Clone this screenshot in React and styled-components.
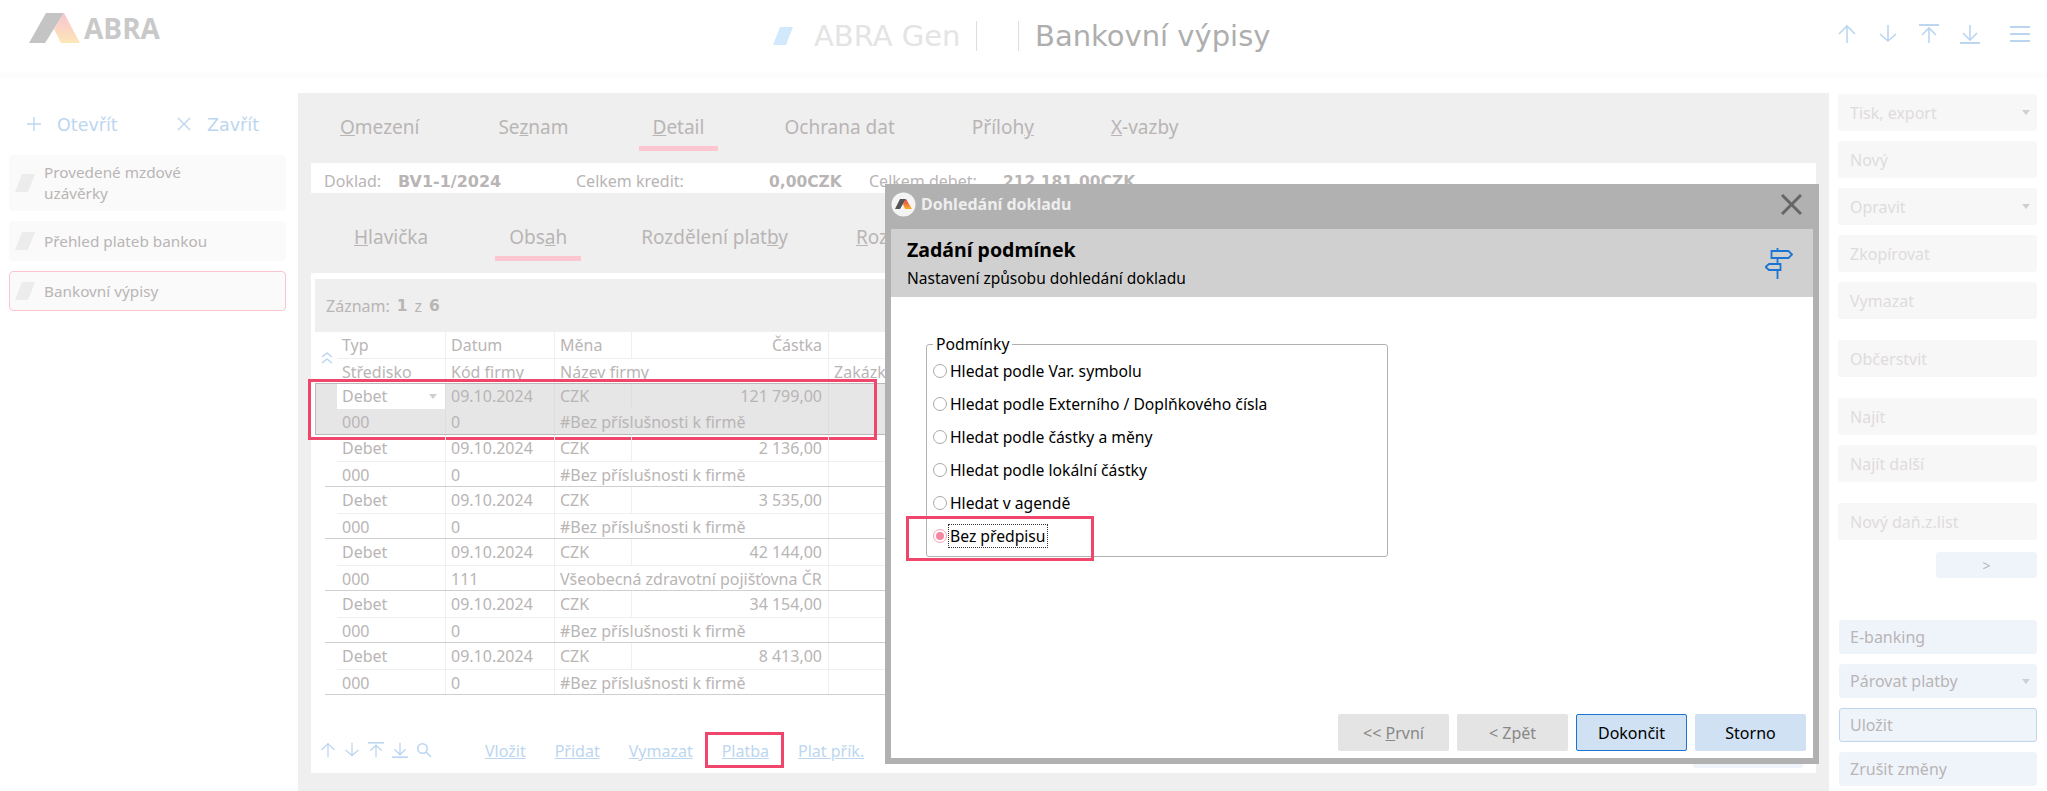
import React from "react";
import styled, { createGlobalStyle } from "styled-components";

const FONT = `"Noto Sans", "DejaVu Sans", sans-serif`;
const HEADING = `"DejaVu Sans", sans-serif`;
const TEXT = "#b9b5b5";
const LINK = "#bcd6f0";
const MARK = "#f0466c";

const GlobalStyle = createGlobalStyle`
  html, body { margin: 0; padding: 0; background: #fff; }
  *, *::before, *::after { box-sizing: border-box; }
  body { font-family: ${FONT}; }
`;

const Page = styled.div`
  position: relative;
  width: 2047px;
  height: 791px;
  overflow: hidden;
  display: flex;
  flex-direction: column;
`;

/* header */
const Header = styled.header`
  height: 78px;
  margin-bottom: 15px;
  flex: none;
  display: grid;
  grid-template-columns: 773px 1fr auto;
  border-bottom: 6px solid #fdfdfd;
`;
const Brand = styled.div`
  display: flex;
  align-items: center;
  padding: 0 0 16px 29px;
  gap: 3px;
`;
const BrandName = styled.span`
  font-family: "Open Sans", sans-serif;
  font-weight: 700;
  font-size: 28px;
  color: #c9c9c9;
`;
const TitleRow = styled.div`
  display: flex;
  align-items: center;
  font-family: ${HEADING};
`;
const AppName = styled.span`
  font-size: 29px;
  color: #e4e4e4;
  margin-left: 21px;
  width: 162px;
  white-space: nowrap;
`;
const Divider = styled.span`
  width: 1px;
  height: 30px;
  background: #dedede;
  margin-right: ${(p) => p.$gap}px;
`;
const PageName = styled.span`
  font-size: 29px;
  color: #aeaeae;
`;
const NavIcons = styled.div`
  display: flex;
  align-items: center;
  gap: 21px;
  padding: 0 17px 4px 0;
  color: ${LINK};
`;

/* layout */
const Body = styled.div`
  flex: 1;
  display: flex;
  min-height: 0;
`;
const LeftBar = styled.aside`
  width: 298px;
  flex: none;
  padding: 0 12px 0 9px;
`;
const OpenClose = styled.div`
  display: flex;
  height: 62px;
  padding: 19px 0 0 18px;
  color: ${LINK};
  font-family: ${HEADING};
  font-size: 17.5px;
`;
const OpenCloseItem = styled.div`
  display: flex;
  flex: none;
  align-items: center;
  gap: 16px;
  height: 24px;
  width: 150px;
  span { margin-top: 2px; }
`;
const MenuItem = styled.div`
  display: flex;
  align-items: center;
  gap: 9px;
  padding-left: 5px;
  height: ${(p) => p.$h}px;
  margin-bottom: 10px;
  background: #fafafa;
  border-radius: 4px;
  border: 1px solid ${(p) => (p.$active ? "#fcc5cf" : "#fafafa")};
  color: ${TEXT};
  font-size: 15.3px;
  line-height: 21px;
`;
const Main = styled.main`
  flex: 1;
  min-width: 0;
  background: #efefef;
  display: flex;
  flex-direction: column;
`;
const Tabs = styled.nav`
  display: flex;
  height: ${(p) => p.$h}px;
  padding-left: ${(p) => p.$left}px;
  flex: none;
`;
const Tab = styled.div`
  margin: 0 26px 0 ${(p) => p.$before ?? 26}px;
  padding: 0 14px 6px;
  height: 100%;
  display: flex;
  align-items: flex-end;
  font-size: 19px;
  line-height: 26px;
  color: ${TEXT};
  white-space: nowrap;
  border-bottom: 5px solid ${(p) => (p.$active ? "#fdc6d0" : "transparent")};
`;
const InfoStrip = styled.div`
  flex: none;
  height: 30px;
  margin: 12px 13px 0;
  padding-top: 6px;
  background: #fff;
  display: flex;
  align-items: center;
  font-size: 16px;
  color: ${TEXT};
  overflow: hidden;
`;
const InfoLabel = styled.span`
  width: ${(p) => p.$w}px;
  flex: none;
  white-space: nowrap;
  padding-left: ${(p) => p.$pad ?? 0}px;
`;
const StrongValue = styled.b`
  font-family: ${HEADING};
  font-size: ${(p) => p.$size ?? 15.5}px;
`;
const Panel = styled.section`
  flex: 1;
  margin: 12px 13px 18px;
  background: #fff;
  padding: 6px 0 4px 4px;
  display: flex;
  flex-direction: column;
  min-height: 0;
`;
const RecordBar = styled.div`
  height: 53px;
  flex: none;
  display: flex;
  align-items: center;
  gap: 7px;
  padding-left: 11px;
  background: #efefef;
  color: ${TEXT};
  font-size: 16px;
`;
const Table = styled.div`
  position: relative;
  padding-left: 10px;
`;
const Group = styled.div`
  position: relative;
  border-bottom: 1px solid #cfcfcf;
  ${(p) => p.$head && "border-bottom: 0;"}
  ${(p) =>
    p.$selected &&
    `
    margin-left: -10px;
    padding-left: 10px;
    background: #e6e6e6;
    outline: 1px solid #b9b9b9;
    outline-offset: -1px;
    &::after {
      content: "";
      position: absolute;
      left: -7px;
      top: -4px;
      width: 569px;
      height: 61px;
      border: 3px solid ${MARK};
    }
  `}
`;
const Row = styled.div`
  display: grid;
  grid-template-columns: 12px 109px 109px 77px 197px 1fr;
  height: 26px;
  & + & {
    height: 25px;
  }
  & + & > div:not(:first-child) { border-top: 1px solid ${(p) => (p.$sel ? "#dedede" : "#efefef")}; }
`;
const Gutter = styled.div``;
const Cell = styled.div`
  padding: 0 6px 0 5px;
  font-size: 16px;
  line-height: 27px;
  color: ${TEXT};
  white-space: nowrap;
  overflow: hidden;
  text-align: ${(p) => (p.$right ? "right" : "left")};
  border-right: 1px solid ${(p) => (p.$sel ? "#dedede" : "#efefef")};
  ${(p) => p.$wide && "grid-column: span 2;"}
`;
const SelectCell = styled(Cell)`
  background: #fff;
  display: flex;
  justify-content: space-between;
  align-items: center;
  padding-right: 8px;
`;
const Caret = styled.i`
  width: 0;
  height: 0;
  border-left: 4px solid transparent;
  border-right: 4px solid transparent;
  border-top: 5px solid #cfcfcf;
`;
const Chevrons = styled.svg`
  position: absolute;
  left: 6px;
  top: 19px;
`;
const Footer = styled.div`
  margin-top: auto;
  height: 36px;
  flex: none;
  display: flex;
  align-items: center;
  padding-left: 5px;
  color: ${LINK};
`;
const FooterIcons = styled.div`
  display: flex;
  gap: 8px;
  width: 165px;
  align-items: center;
  padding-bottom: 3px;
`;
const Links = styled.div`
  display: flex;
  gap: 29px;
  flex: 1;
`;
const ToolLink = styled.a`
  position: relative;
  font-size: 16px;
  line-height: 22px;
  color: ${LINK};
  text-decoration: underline;
  ${(p) =>
    p.$marked &&
    `
    &::after {
      content: "";
      position: absolute;
      left: -17px;
      right: -15px;
      top: -8px;
      height: 36px;
      border: 3px solid ${MARK};
    }
  `}
`;
const GhostButton = styled.div`
  width: 110px;
  height: 34px;
  background: #eff4fb;
  margin: 0 13px 0 0;
  border-radius: 3px;
`;

/* right bar */
const RightBar = styled.aside`
  width: 218px;
  flex: none;
  padding: 1px 10px 0 9px;
  display: flex;
  flex-direction: column;
`;
const SideButton = styled.div`
  flex: none;
  height: ${(p) => (p.$blue ? 34 : 37)}px;
  margin-top: ${(p) => p.$top ?? 10}px;
  margin-left: ${(p) => (p.$blue ? 1 : 0)}px;
  padding: 0 6px 0 ${(p) => (p.$blue ? 10 : 11)}px;
  display: flex;
  align-items: center;
  justify-content: space-between;
  border-radius: 3px;
  font-size: 16px;
  background: ${(p) => (p.$blue ? "#eff4fb" : "#f7f7f7")};
  color: ${(p) => (p.$blue ? TEXT : "#dfdcdc")};
  border: 1px solid ${(p) => (p.$focus ? LINK : "transparent")};
`;
const NextButton = styled.div`
  align-self: flex-end;
  width: 101px;
  height: 26px;
  margin-top: 12px;
  background: #eff4fb;
  border-radius: 3px;
  color: ${TEXT};
  font-size: 14px;
  display: flex;
  align-items: center;
  justify-content: center;
`;

/* dialog */
const Dialog = styled.div`
  position: absolute;
  left: 885px;
  top: 184px;
  width: 934px;
  height: 580px;
  background: #b1b1b1;
  display: flex;
  flex-direction: column;
  padding: 0 6px 6px;
  font-size: 15.7px;
  color: #000;
`;
const DialogTitle = styled.div`
  height: 45px;
  flex: none;
  display: flex;
  align-items: center;
  gap: 5px;
  padding-bottom: 5px;
  font-weight: 700;
  font-size: 16px;
  color: #eee;
  span { flex: 1; }
`;
const CloseIcon = styled.svg`
  margin-right: 11px;
`;
const DialogHead = styled.div`
  height: 68px;
  flex: none;
  background: #d0d0d0;
  padding: 8px 20px 0 16px;
  display: flex;
  justify-content: space-between;
  align-items: flex-start;
  h2 { margin: 0 0 5px; font-size: 19.5px; line-height: 26px; font-weight: 700; }
  p { margin: 0; font-size: 15.5px; line-height: 20px; }
`;
const Signpost = styled.svg`
  margin-top: 11px;
`;
const DialogBody = styled.div`
  flex: 1;
  background: #fff;
  position: relative;
  display: flex;
  flex-direction: column;
  padding: 39px 7px 7px 35px;
`;
const Conditions = styled.fieldset`
  width: 462px;
  height: 221px;
  margin: 0;
  padding: 2px 0 0 6px;
  border: 1px solid #b1b1b1;
  border-radius: 3px;
  legend {
    padding: 0 3px;
    margin-left: 0;
    font-size: 15.7px;
    line-height: 16px;
  }
`;
const Option = styled.div`
  position: relative;
  display: flex;
  align-items: center;
  height: 33px;
  gap: 2px;
  ${(p) =>
    p.$marked &&
    `
    &::after {
      content: "";
      position: absolute;
      left: -27px;
      top: -3px;
      width: 188px;
      height: 45px;
      border: 3px solid ${MARK};
    }
  `}
`;
const Radio = styled.i`
  width: 14px;
  height: 14px;
  flex: none;
  border-radius: 50%;
  border: 1px solid ${(p) => (p.$on ? "#f7a3b6" : "#aaa")};
  background: #fff;
  display: flex;
  align-items: center;
  justify-content: center;
  &::after {
    content: "";
    width: 8px;
    height: 8px;
    border-radius: 50%;
    background: ${(p) => (p.$on ? "#f7889f" : "transparent")};
  }
`;
const OptionText = styled.span`
  line-height: 22px;
  padding: 0 1px;
  ${(p) => p.$focus && "outline: 1px dotted #333;"}
`;
const DialogActions = styled.div`
  margin-top: auto;
  display: flex;
  justify-content: flex-end;
  gap: 8px;
`;
const DialogButton = styled.div`
  width: 111px;
  height: 37px;
  border-radius: 2px;
  display: flex;
  align-items: center;
  justify-content: center;
  font-size: 16px;
  background: ${(p) => (p.$off ? "#e4e4e4" : "#cfe1f3")};
  color: ${(p) => (p.$off ? "#888" : "#000")};
  border: 1px solid ${(p) => (p.$primary ? "#1b74d2" : "transparent")};
`;

const Slash = ({ color = "#ececec", w = 20, h = 18 }) => (
  <svg width={w} height={h} viewBox="0 0 20 18">
    <polygon points="7,0 20,0 13,18 0,18" fill={color} />
  </svg>
);

const Arrow = ({ kind, size = 20 }) => {
  const down = kind === "down" || kind === "bottom";
  const bar = kind === "top" || kind === "bottom";
  return (
    <svg width={size} height={size} viewBox="0 0 20 20" fill="none" stroke="currentColor" strokeWidth="1.6">
      {down ? (
        <path d={bar ? "M10 1v15M3 9l7 7 7-7" : "M10 1v16M2 10l8 7 8-7"} />
      ) : (
        <path d={bar ? "M10 4v15M3 11l7-7 7 7" : "M10 2v17M2 10l8-8 8 8"} />
      )}
      {bar && <path d={down ? "M0 19h20" : "M0 1h20"} strokeWidth="2" />}
    </svg>
  );
};

const rows = [
  ["2 136,00", "0", "#Bez příslušnosti k firmě"],
  ["3 535,00", "0", "#Bez příslušnosti k firmě"],
  ["42 144,00", "111", "Všeobecná zdravotní pojišťovna ČR"],
  ["34 154,00", "0", "#Bez příslušnosti k firmě"],
  ["8 413,00", "0", "#Bez příslušnosti k firmě"],
];

const options = [
  "Hledat podle Var. symbolu",
  "Hledat podle Externího / Doplňkového čísla",
  "Hledat podle částky a měny",
  "Hledat podle lokální částky",
  "Hledat v agendě",
];

export default function App() {
  return (
    <Page>
      <GlobalStyle />
      <Header>
        <Brand>
          <svg width="52" height="30" viewBox="0 0 52 30">
            <defs>
              <linearGradient id="abraGrad" x1="0" y1="0" x2="0" y2="1">
                <stop offset="0" stopColor="#f8c4d0" />
                <stop offset="1" stopColor="#fde6b8" />
              </linearGradient>
            </defs>
            <polygon points="17,0 35,0 16,30 0,30" fill="#c4c4c4" />
            <polygon points="35,0 51,30 32,30 25,16" fill="url(#abraGrad)" />
          </svg>
          <BrandName>ABRA</BrandName>
        </Brand>
        <TitleRow>
          <Slash color="#d2e9fd" />
          <AppName>ABRA Gen</AppName>
          <Divider $gap={41} />
          <Divider $gap={16} />
          <PageName>Bankovní výpisy</PageName>
        </TitleRow>
        <NavIcons>
          <Arrow kind="up" />
          <Arrow kind="down" />
          <Arrow kind="top" />
          <Arrow kind="bottom" />
          <svg width="20" height="16" viewBox="0 0 20 16" stroke="currentColor" strokeWidth="2" style={{ marginLeft: 9 }}>
            <path d="M0 1h20M0 8h20M0 15h20" />
          </svg>
        </NavIcons>
      </Header>
      <Body>
        <LeftBar>
          <OpenClose>
            <OpenCloseItem>
              <svg width="14" height="14" viewBox="0 0 14 14" stroke="currentColor" strokeWidth="1.4">
                <path d="M7 0v14M0 7h14" />
              </svg>
              <span>Otevřít</span>
            </OpenCloseItem>
            <OpenCloseItem>
              <svg width="14" height="14" viewBox="0 0 14 14" stroke="currentColor" strokeWidth="1.4">
                <path d="M1 1l12 12M13 1L1 13" />
              </svg>
              <span>Zavřít</span>
            </OpenCloseItem>
          </OpenClose>
          <MenuItem $h={56}>
            <Slash />
            <span>
              Provedené mzdové
              <br />
              uzávěrky
            </span>
          </MenuItem>
          <MenuItem $h={40}>
            <Slash />
            <span>Přehled plateb bankou</span>
          </MenuItem>
          <MenuItem $h={40} $active>
            <Slash />
            <span>Bankovní výpisy</span>
          </MenuItem>
        </LeftBar>
        <Main>
          <Tabs $h={58} $left={2}>
            <Tab><span><u>O</u>mezení</span></Tab>
            <Tab $before={25}><span>Se<u>z</u>nam</span></Tab>
            <Tab $active $before={30}><span><u>D</u>etail</span></Tab>
            <Tab>Ochrana dat</Tab>
            <Tab $before={23}><span>Příloh<u>y</u></span></Tab>
            <Tab $before={23}><span><u>X</u>-vazby</span></Tab>
          </Tabs>
          <InfoStrip>
            <InfoLabel $w={87} $pad={13}>Doklad:</InfoLabel>
            <InfoLabel $w={178}><StrongValue $size={16}>BV1-1/2024</StrongValue></InfoLabel>
            <InfoLabel $w={193}>Celkem kredit:</InfoLabel>
            <InfoLabel $w={100}><StrongValue>0,00CZK</StrongValue></InfoLabel>
            <InfoLabel $w={134}>Celkem debet:</InfoLabel>
            <InfoLabel $w={200}><StrongValue>212 181,00CZK</StrongValue></InfoLabel>
          </InfoStrip>
          <Tabs $h={68} $left={16}>
            <Tab><span><u>H</u>lavička</span></Tab>
            <Tab $active $before={27}><span>Obs<u>a</u>h</span></Tab>
            <Tab $before={20}><span>Rozdělení plat<u>b</u>y</span></Tab>
            <Tab $before={14}><span><u>R</u>oz</span></Tab>
          </Tabs>
          <Panel>
            <RecordBar>
              <span>Záznam:</span>
              <StrongValue>1</StrongValue>
              <span>z</span>
              <StrongValue>6</StrongValue>
            </RecordBar>
            <Table>
              <Chevrons width="12" height="13" viewBox="0 0 12 13" fill="none" stroke={LINK} strokeWidth="1.6">
                <path d="M1 6l5-4 5 4M1 12l5-4 5 4" />
              </Chevrons>
              <Group $head>
                <Row>
                  <Gutter />
                  <Cell>Typ</Cell>
                  <Cell>Datum</Cell>
                  <Cell>Měna</Cell>
                  <Cell $right>Částka</Cell>
                  <Cell />
                </Row>
                <Row>
                  <Gutter />
                  <Cell>Středisko</Cell>
                  <Cell>Kód firmy</Cell>
                  <Cell $wide>Název firmy</Cell>
                  <Cell>Zakázka</Cell>
                </Row>
              </Group>
              <Group $selected>
                <Row>
                  <Gutter />
                  <SelectCell $sel>Debet<Caret /></SelectCell>
                  <Cell $sel>09.10.2024</Cell>
                  <Cell $sel>CZK</Cell>
                  <Cell $sel $right>121 799,00</Cell>
                  <Cell $sel />
                </Row>
                <Row $sel>
                  <Gutter />
                  <Cell $sel>000</Cell>
                  <Cell $sel>0</Cell>
                  <Cell $sel $wide>#Bez příslušnosti k firmě</Cell>
                  <Cell $sel />
                </Row>
              </Group>
              {rows.map(([amount, code, name], i) => (
                <Group key={i}>
                  <Row>
                    <Gutter />
                    <Cell>Debet</Cell>
                    <Cell>09.10.2024</Cell>
                    <Cell>CZK</Cell>
                    <Cell $right>{amount}</Cell>
                    <Cell />
                  </Row>
                  <Row>
                    <Gutter />
                    <Cell>000</Cell>
                    <Cell>{code}</Cell>
                    <Cell $wide>{name}</Cell>
                    <Cell />
                  </Row>
                </Group>
              ))}
            </Table>
            <Footer>
              <FooterIcons>
                <Arrow kind="up" size={16} />
                <Arrow kind="down" size={16} />
                <Arrow kind="top" size={16} />
                <Arrow kind="bottom" size={16} />
                <svg width="16" height="16" viewBox="0 0 16 16" fill="none" stroke="currentColor" strokeWidth="1.6">
                  <circle cx="6.5" cy="6.5" r="4.7" />
                  <path d="M10 10l5 5" />
                </svg>
              </FooterIcons>
              <Links>
                <ToolLink>Vložit</ToolLink>
                <ToolLink>Přidat</ToolLink>
                <ToolLink>Vymazat</ToolLink>
                <ToolLink $marked>Platba</ToolLink>
                <ToolLink>Plat přík.</ToolLink>
              </Links>
              <GhostButton />
            </Footer>
          </Panel>
        </Main>
        <RightBar>
          <SideButton $top={0}>Tisk, export<Caret /></SideButton>
          <SideButton>Nový</SideButton>
          <SideButton>Opravit<Caret /></SideButton>
          <SideButton>Zkopírovat</SideButton>
          <SideButton>Vymazat</SideButton>
          <SideButton $top={21}>Občerstvit</SideButton>
          <SideButton $top={21}>Najít</SideButton>
          <SideButton>Najít další</SideButton>
          <SideButton $top={21}>Nový daň.z.list</SideButton>
          <NextButton>&gt;</NextButton>
          <SideButton $blue $top={42}>E-banking</SideButton>
          <SideButton $blue>Párovat platby<Caret /></SideButton>
          <SideButton $blue $focus>Uložit</SideButton>
          <SideButton $blue>Zrušit změny</SideButton>
        </RightBar>
      </Body>
      <Dialog>
        <DialogTitle>
          <svg width="25" height="25" viewBox="0 0 25 25">
            <defs>
              <linearGradient id="dialogLogoGrad" x1="0" y1="0" x2="0" y2="1">
                <stop offset="0" stopColor="#e8374f" />
                <stop offset="1" stopColor="#f9b11f" />
              </linearGradient>
            </defs>
            <circle cx="12.5" cy="12.5" r="12" fill="#f4f4f4" />
            <polygon points="9,7 15,7 9,17 4,17" fill="#555" />
            <polygon points="15,7 21,17 14,17 12,12" fill="url(#dialogLogoGrad)" />
          </svg>
          <span>Dohledání dokladu</span>
          <CloseIcon width="21" height="21" viewBox="0 0 21 21" stroke="#666" strokeWidth="3">
            <path d="M1 1l19 19M20 1L1 20" />
          </CloseIcon>
        </DialogTitle>
        <DialogHead>
          <div>
            <h2>Zadání podmínek</h2>
            <p>Nastavení způsobu dohledání dokladu</p>
          </div>
          <Signpost width="28" height="31" viewBox="0 0 28 31" fill="none" stroke="#1b74d2" strokeWidth="1.8">
            <path d="M12.5 0v3M12.5 10v6M12.5 22v9" />
            <path d="M6.5 3h17l3.5 3.5-3.5 3.5h-17zM15.5 16H4l-3.5 3 3.5 3h11.5z" />
          </Signpost>
        </DialogHead>
        <DialogBody>
          <Conditions>
            <legend>Podmínky</legend>
            {options.map((o) => (
              <Option key={o}>
                <Radio />
                <OptionText>{o}</OptionText>
              </Option>
            ))}
            <Option $marked>
              <Radio $on />
              <OptionText $focus>Bez předpisu</OptionText>
            </Option>
          </Conditions>
          <DialogActions>
            <DialogButton $off>&lt;&lt;&nbsp;<u>P</u>rvní</DialogButton>
            <DialogButton $off>&lt; Zpět</DialogButton>
            <DialogButton $primary>Dokončit</DialogButton>
            <DialogButton>Storno</DialogButton>
          </DialogActions>
        </DialogBody>
      </Dialog>
    </Page>
  );
}
